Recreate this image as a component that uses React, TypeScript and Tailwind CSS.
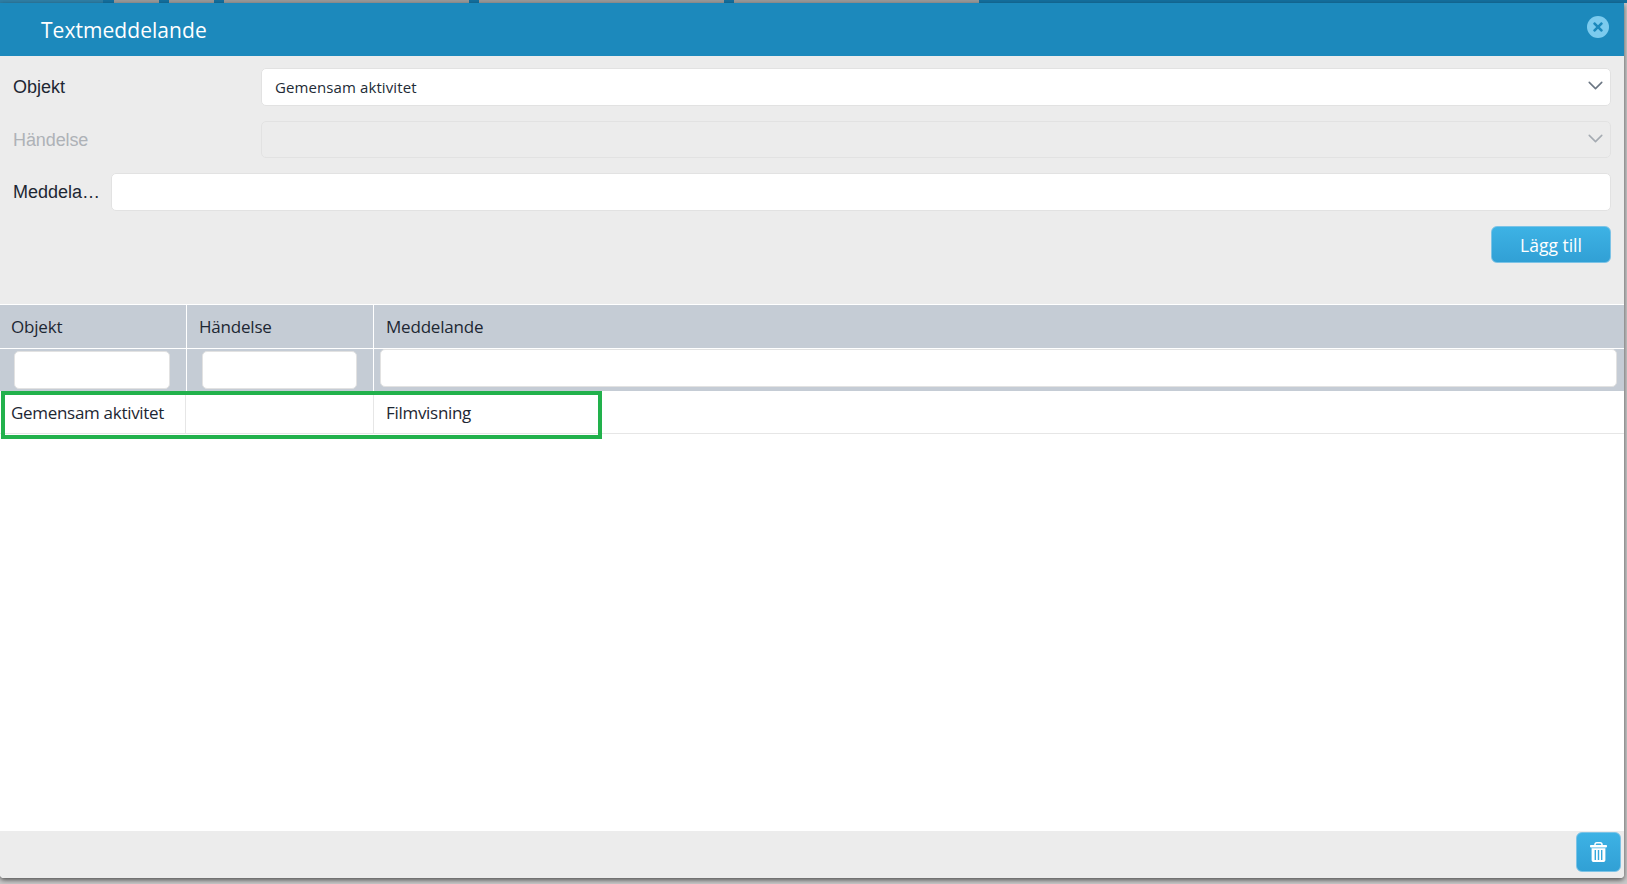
import React from "react";
import { ChevronDown } from "lucide-react";
import { FaTimes } from "react-icons/fa";

const Select: React.FC<{ value?: string; disabled?: boolean }> = ({ value, disabled }) => (
  <div
    className={`flex-1 flex items-center justify-between pl-[13px] pr-[2px] rounded-[5px] border border-[#e2e2e2] ${
      disabled ? "h-[37px] bg-[#ececec]" : "h-[38px] bg-white"
    }`}
  >
    <span className="text-[15px] tracking-[0.1px] text-[#222b36] font-['Open_Sans',sans-serif]">{value}</span>
    <ChevronDown
      className={`w-[25px] h-[25px] mt-[-3px] ${disabled ? "text-[#a5abb2]" : "text-[#6b7683]"}`}
      strokeWidth={1.5}
    />
  </div>
);

const FilterCell: React.FC<{ w: string; children: React.ReactNode }> = ({ w, children }) => (
  <div className={`${w} h-full flex items-center border-r border-white`}>{children}</div>
);

const TrashIcon = () => (
  <svg width="17" height="20" viewBox="0 0 17 20">
    <path d="M5 3.5V2.6C5 1.4 5.8.8 6.9.8h3.2c1.1 0 1.9.6 1.9 1.8v.9" fill="none" stroke="currentColor" strokeWidth="1.5" />
    <rect x="0" y="3" width="17" height="2.4" rx="0.8" fill="currentColor" />
    <path d="M1.6 6.2h13.8V18c0 1.1-.8 2-1.8 2H3.4c-1 0-1.8-.9-1.8-2z" fill="currentColor" />
    <rect x="4.6" y="8" width="1.4" height="10" fill="#35a7db" />
    <rect x="7.8" y="8" width="1.4" height="10" fill="#35a7db" />
    <rect x="11" y="8" width="1.4" height="10" fill="#35a7db" />
  </svg>
);

export default function App() {
  return (
    <div className="h-[884px] w-[1627px] overflow-hidden bg-[#c9c9c9] font-['Liberation_Sans',sans-serif] text-[#1d2733]">
      <div className="h-[3px] flex bg-[#14709f]">
        <div className="w-[103px] bg-[#2f7fa6]" />
        <div className="ml-[11px] w-[45px] bg-[#9a9a9a]" />
        <div className="ml-[10px] w-[45px] bg-[#9a9a9a]" />
        <div className="ml-[10px] w-[245px] bg-[#9a9a9a]" />
        <div className="ml-[10px] w-[245px] bg-[#9a9a9a]" />
        <div className="ml-[10px] w-[245px] bg-[#9a9a9a]" />
      </div>
      <div className="relative w-[1624px] h-[875px] flex flex-col bg-white rounded-b-[4px] overflow-hidden shadow-[0_2px_5px_rgba(0,0,0,0.6)]">
        <div className="h-[53px] shrink-0 flex items-center justify-between pl-[41px] pr-[15px] bg-[#1c89bc] text-white">
          <span className="text-[21px] tracking-[0.05px] font-['Open_Sans',sans-serif] mt-[2px]">Textmeddelande</span>
          <span className="w-[22px] h-[22px] mt-[-5px] rounded-full bg-[#7ccbee] flex items-center justify-center text-[#1c89bc]">
            <FaTimes className="w-[14px] h-[14px]" />
          </span>
        </div>

        <div className="h-[248px] shrink-0 bg-[#ececec] pt-[12px] pl-[13px] pr-[13px] flex flex-col">
          <div className="flex items-center">
            <label className="w-[248px] text-[18px]">Objekt</label>
            <Select value="Gemensam aktivitet" />
          </div>
          <div className="flex items-center mt-[15px]">
            <label className="w-[248px] text-[18px] tracking-[-0.1px] text-[#aeb2b7] pt-[1px]">Händelse</label>
            <Select disabled />
          </div>
          <div className="flex items-center mt-[15px]">
            <label className="w-[98px] text-[18px] truncate">Meddela…</label>
            <input className="flex-1 h-[38px] bg-white rounded-[5px] border border-[#e2e2e2]" />
          </div>
          <div className="flex justify-end mt-[15px]">
            <button className="w-[120px] h-[37px] pt-[1px] rounded-[6px] border border-[#7cc3e6] bg-gradient-to-b from-[#3db2e5] to-[#31a0d5] text-white text-[17.5px] font-['Open_Sans',sans-serif]">
              Lägg till
            </button>
          </div>
        </div>

        <div className="h-[43px] shrink-0 mt-[1px] flex bg-[#c5ccd5] text-[17px] font-['Open_Sans',sans-serif] tracking-[-0.2px]">
          <div className="w-[187px] flex items-center pl-[11px] border-r border-white">Objekt</div>
          <div className="w-[187px] flex items-center pl-[12px] border-r border-white">Händelse</div>
          <div className="flex-1 flex items-center pl-[12px]">Meddelande</div>
        </div>
        <div className="h-[43px] shrink-0 flex items-center bg-[#c5ccd5] border-t border-white">
          <FilterCell w="w-[187px]">
            <input className="w-[156px] h-[38px] ml-[14px] mt-[-1px] bg-white rounded-[5px] border border-[#e2e2e2]" />
          </FilterCell>
          <FilterCell w="w-[187px]">
            <input className="w-[155px] h-[38px] ml-[15px] mt-[-1px] bg-white rounded-[5px] border border-[#e2e2e2]" />
          </FilterCell>
          <div className="flex-1 pl-[6px] pr-[7px] h-full flex items-center">
            <input className="w-full h-[38px] mt-[-4px] bg-white rounded-[5px] border border-[#e2e2e2]" />
          </div>
        </div>
        <div className="h-[43px] shrink-0 flex border-b border-[#e6e6e6] text-[17px] font-['Open_Sans',sans-serif] tracking-[-0.3px] bg-white">
          <div className="w-[186px] flex items-center pl-[11px] pt-[2px] border-r border-[#e6e6e6]">Gemensam aktivitet</div>
          <div className="w-[188px] border-r border-[#e6e6e6]" />
          <div className="flex-1 flex items-center pl-[12px] pt-[2px]">Filmvisning</div>
        </div>

        <div className="flex-1 bg-white" />

        <div className="h-[47px] shrink-0 bg-[#ececec] flex justify-end items-start pr-[3px] pt-[1px]">
          <button className="w-[45px] h-[40px] rounded-[6px] border border-[#7cc3e6] bg-gradient-to-b from-[#3db2e5] to-[#31a0d5] text-white flex items-center justify-center">
            <TrashIcon />
          </button>
        </div>

        <div className="absolute left-[1px] top-[388px] w-[601px] h-[48px] border-[4px] border-[#22b14c]" />
      </div>
    </div>
  );
}
